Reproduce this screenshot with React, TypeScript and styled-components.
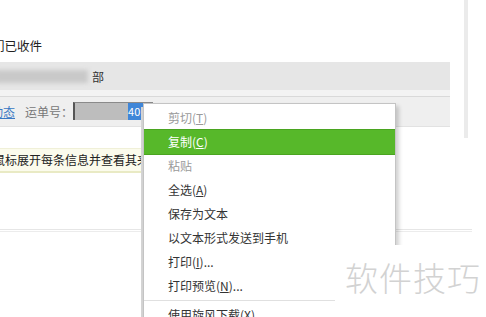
import React from "react";
import styled, { createGlobalStyle } from "styled-components";

const Global = createGlobalStyle`
  html, body { margin: 0; padding: 0; background: #ffffff; overflow: hidden; }
  body { font-family: "Noto Sans CJK SC", "Noto Sans", sans-serif; }
`;

const Page = styled.div`
  position: relative;
  width: 486px;
  height: 317px;
  overflow: hidden;
  background: #ffffff;
  font-size: 12px;
  color: #333;
`;

const TopPanel = styled.div`
  width: 464px;
  height: 138px;
  border-right: 4px solid #ebebeb;
  display: flex;
  flex-direction: column;
`;

const Title = styled.div`
  height: 62px;
  box-sizing: border-box;
  padding-top: 37px;
  line-height: 18px;
  font-size: 12.5px;
  color: #222;
  white-space: nowrap;
  span.cut { margin-left: -8px; }
`;

const NameRow = styled.div`
  width: 450px;
  height: 28px;
  background: #e6e6e6;
  display: flex;
  align-items: center;
`;

const Blurred = styled.div<{ $w: number }>`
  width: ${(p) => p.$w}px;
  height: 13px;
  background: #c9c9c9;
  filter: blur(2px);
  margin-left: -4px;
  margin-right: 4px;
`;

const Strip = styled.div`
  width: 450px;
  height: 6px;
  background: #f3f3f3;
  border-bottom: 1px solid #d9d9d9;
`;

const TrackRow = styled.div`
  width: 450px;
  height: 29px;
  background: #efefef;
  border-bottom: 1px solid #e2e2e2;
  display: flex;
  align-items: center;
  white-space: nowrap;
`;

const Link = styled.span`
  color: #3a78c3;
  text-decoration: underline;
  margin-left: -33px;
  margin-right: 10px;
`;

const Label = styled.span`
  color: #777;
  margin-right: 0;
`;

const Field = styled.div`
  width: 78px;
  height: 17px;
  border-top: 1px solid #8a8a8a;
  border-left: 2px solid #555;
  display: flex;
  align-items: stretch;
  margin-top: -2px;
`;

const FieldMask = styled.div`
  width: 53px;
  background: #bdbdbd;
`;

const Selected = styled.span`
  width: 17px;
  background: #3f86d8;
  color: #fff;
  font-size: 11px;
  line-height: 17px;
  overflow: hidden;
`;

const TipBar = styled.div`
  width: 395px;
  height: 22px;
  margin-top: 10px;
  background: #fbfbec;
  border-top: 1px solid #f0f0d8;
  border-bottom: 2px solid #e9eac4;
  line-height: 22px;
  white-space: nowrap;
  overflow: hidden;
  color: #222;
`;

const TipText = styled.span`
  margin-left: -7px;
`;

const Rule = styled.div`
  width: 472px;
  height: 1px;
  margin-top: 56px;
  border-top: 1px solid #e6e6e6;
  border-bottom: 1px solid #ececec;
`;

const Menu = styled.ul`
  position: absolute;
  left: 143px;
  top: 103px;
  width: 251px;
  margin: 0;
  padding: 2px 0 0;
  list-style: none;
  background: #ffffff;
  border: 1px solid #c4c4c4;
  box-shadow: 3px 3px 4px rgba(0, 0, 0, 0.18), -6px 0 0 -4px #d4d4d4;
`;

const Item = styled.li<{ $disabled?: boolean; $active?: boolean }>`
  height: 24px;
  line-height: 24px;
  padding-left: 24px;
  white-space: nowrap;
  color: ${(p) => (p.$active ? "#ffffff" : p.$disabled ? "#9a9a9a" : "#333333")};
  background: ${(p) => (p.$active ? "#57b82a" : "transparent")};
  border-top: ${(p) => (p.$active ? "1px solid #4aa420" : "none")};
  border-bottom: ${(p) => (p.$active ? "1px solid #4aa420" : "none")};
  margin: ${(p) => (p.$active ? "-1px 0" : "0")};
  u { text-decoration: underline; }
`;

const Separator = styled.li`
  height: 1px;
  margin: 2px 0 2px 0;
  background: #e0e0e0;
`;

const Watermark = styled.div`
  position: absolute;
  left: 335px;
  top: 245px;
  right: 0;
  bottom: 0;
  background: #ffffff;
  display: flex;
  align-items: flex-start;
  padding: 8px 0 0 10px;
  font-size: 33px;
  letter-spacing: 1px;
  color: #d2d2d2;
  white-space: nowrap;
  font-weight: 300;
`;

export default function App() {
  return (
    <Page>
      <Global />
      <TopPanel>
        <Title>
          <span className="cut">们</span>已收件
        </Title>
        <NameRow>
          <Blurred $w={92} />
          <span>部</span>
        </NameRow>
        <Strip />
        <TrackRow>
          <Link>物流动态</Link>
          <Label>运单号：</Label>
          <Field>
            <FieldMask />
            <Selected>401</Selected>
          </Field>
        </TrackRow>
      </TopPanel>
      <TipBar>
        <TipText>鼠标展开每条信息并查看其来源信息</TipText>
      </TipBar>
      <Rule />
      <Menu>
        <Item $disabled>剪切(<u>T</u>)</Item>
        <Item $active>复制(<u>C</u>)</Item>
        <Item $disabled>粘贴</Item>
        <Item>全选(<u>A</u>)</Item>
        <Item>保存为文本</Item>
        <Item>以文本形式发送到手机</Item>
        <Item>打印(<u>I</u>)...</Item>
        <Item>打印预览(<u>N</u>)...</Item>
        <Separator />
        <Item>使用旋风下载(<u>X</u>)</Item>
      </Menu>
      <Watermark>软件技巧</Watermark>
    </Page>
  );
}
